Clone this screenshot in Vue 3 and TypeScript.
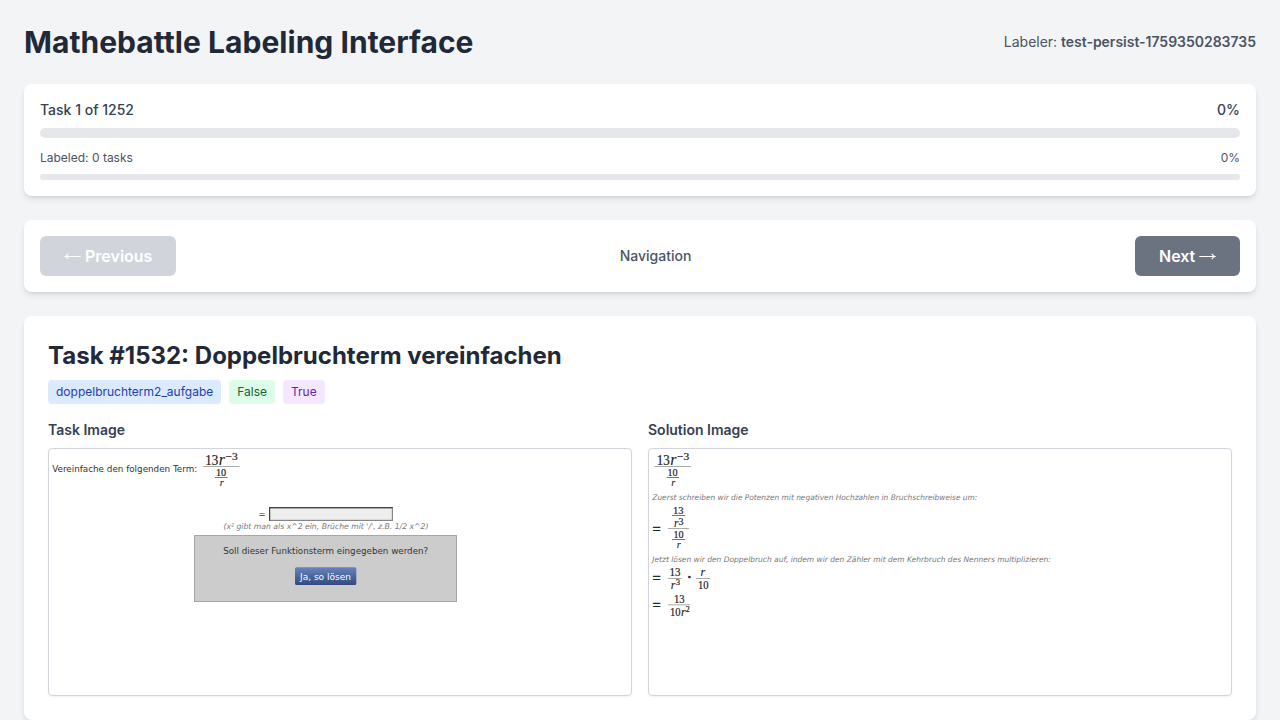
<script setup lang="ts">
import { ref, computed } from 'vue'

interface Glyph {
  t: string
  x: number
  y: number
  s: number
  w?: number
  k?: string
}
interface Rule {
  x: number
  y: number
  w: number
  dark?: boolean
}

const labeler = 'test-persist-1759350283735'
const total = 1252
const current = ref(1)
const labeled = ref(0)
const progress = computed(() => Math.round(((current.value - 1) / total) * 100))
const labeledProgress = computed(() => Math.round((labeled.value / total) * 100))

const tags = [
  { text: 'doppelbruchterm2_aufgabe', tone: 'blue' },
  { text: 'False', tone: 'green' },
  { text: 'True', tone: 'purple' },
]

/* Numerator 13r^-3 over 10/r, placed at a horizontal offset */
const termGlyphs = (dx: number): Glyph[] => [
  { t: '13', x: dx + 2.3, y: 15.9, s: 14.5, w: 13, k: 'math' },
  { t: 'r', x: dx + 15.8, y: 15.9, s: 16, k: 'math var' },
  { t: '−3', x: dx + 22.5, y: 11.4, s: 10, w: 12.3, k: 'math' },
  { t: '10', x: dx + 13, y: 26.7, s: 10.5, w: 10.2, k: 'math' },
  { t: 'r', x: dx + 16.7, y: 36.8, s: 10.5, k: 'math var' },
]
const termRules = (dx: number): Rule[] => [
  { x: dx, y: 17, w: 36.5 },
  { x: dx + 12, y: 28, w: 12.5, dark: true },
]

const taskGlyphs: Glyph[] = [
  { t: 'Vereinfache den folgenden Term:', x: 3.2, y: 23, s: 8.6, w: 145, k: 'plain' },
  ...termGlyphs(154),
  { t: '=', x: 209.5, y: 68, s: 8.6, k: 'plain' },
  { t: "(x² gibt man als x^2 ein, Brüche mit '/', z.B. 1/2 x^2)", x: 174.4, y: 80, s: 7.8, w: 205, k: 'note' },
]
const taskRules = termRules(154)

const solutionGlyphs: Glyph[] = [
  ...termGlyphs(5.5),
  { t: 'Zuerst schreiben wir die Potenzen mit negativen Hochzahlen in Bruchschreibweise um:', x: 3.3, y: 51, s: 7.6, w: 325, k: 'note' },
  { t: '=', x: 3.4, y: 85.4, s: 14.5, k: 'math eq' },
  { t: '13', x: 24, y: 64.7, s: 10.5, w: 10.6, k: 'math' },
  { t: 'r', x: 25, y: 78, s: 11.5, k: 'math var' },
  { t: '3', x: 29.6, y: 76, s: 10.5, w: 5, k: 'math' },
  { t: '10', x: 24.4, y: 88.5, s: 10.5, w: 10.2, k: 'math' },
  { t: 'r', x: 27.7, y: 98.8, s: 10.5, k: 'math var' },
  { t: 'Jetzt lösen wir den Doppelbruch auf, indem wir den Zähler mit dem Kehrbruch des Nenners multiplizieren:', x: 3.3, y: 113, s: 7.6, w: 398.5, k: 'note' },
  { t: '=', x: 3.4, y: 133.8, s: 14.5, k: 'math eq' },
  { t: '13', x: 20.5, y: 127.3, s: 11.5, w: 11, k: 'math' },
  { t: 'r', x: 21.8, y: 139.8, s: 12, k: 'math var' },
  { t: '3', x: 27, y: 135.6, s: 8, w: 4, k: 'math' },
  { t: '·', x: 37.4, y: 134.4, s: 17, k: 'math eq' },
  { t: 'r', x: 51.6, y: 127.3, s: 12, k: 'math var' },
  { t: '10', x: 49, y: 139.5, s: 11.5, w: 10.6, k: 'math' },
  { t: '=', x: 3.4, y: 160.8, s: 14.5, k: 'math eq' },
  { t: '13', x: 25, y: 154.3, s: 11.5, w: 10.6, k: 'math' },
  { t: '10', x: 21, y: 167, s: 11.5, w: 10.6, k: 'math' },
  { t: 'r', x: 32, y: 167, s: 12, k: 'math var' },
  { t: '2', x: 36.8, y: 162.8, s: 8, w: 4, k: 'math' },
]
const solutionRules: Rule[] = [
  ...termRules(5.5),
  { x: 23, y: 66, w: 13, dark: true },
  { x: 19, y: 79, w: 21 },
  { x: 23, y: 90, w: 13, dark: true },
  { x: 19, y: 129, w: 13.5 },
  { x: 47, y: 129, w: 14 },
  { x: 19, y: 155.3, w: 22.5 },
]
</script>

<template>
  <div class="page">
    <header class="header">
      <h1>Mathebattle Labeling Interface</h1>
      <div class="labeler">Labeler: <strong>{{ labeler }}</strong></div>
    </header>

    <section class="card progress">
      <div class="row main-row">
        <span>Task {{ current }} of {{ total }}</span>
        <span>{{ progress }}%</span>
      </div>
      <div class="track"><div class="fill" :style="{ width: progress + '%' }"></div></div>
      <div class="row sub-row">
        <span>Labeled: {{ labeled }} tasks</span>
        <span>{{ labeledProgress }}%</span>
      </div>
      <div class="track thin"><div class="fill" :style="{ width: labeledProgress + '%' }"></div></div>
    </section>

    <nav class="card nav">
      <button class="btn prev" disabled>
        <svg class="arrow" width="17" height="14" viewBox="0 0 17 14">
          <path d="M16.7 7.5H1.5M4.3 4.8C3.6 6 2.5 7.1 1 7.5C2.5 7.9 3.6 9 4.3 10.2" />
        </svg>
        <span>Previous</span>
      </button>
      <span class="nav-label">Navigation</span>
      <button class="btn next">
        <span>Next</span>
        <svg class="arrow" width="17" height="14" viewBox="0 0 17 14">
          <path d="M.3 7.5H15.5M12.7 4.8C13.4 6 14.5 7.1 16 7.5C14.5 7.9 13.4 9 12.7 10.2" />
        </svg>
      </button>
    </nav>

    <main class="card task">
      <h2>Task #1532: Doppelbruchterm vereinfachen</h2>
      <div class="tags">
        <span v-for="tag in tags" :key="tag.text" class="tag" :class="tag.tone">{{ tag.text }}</span>
      </div>
      <div class="images">
        <section>
          <h3>Task Image</h3>
          <div class="frame">
            <svg width="582" height="246" viewBox="0 0 582 246">
              <defs>
                <linearGradient id="solve" x1="0" y1="0" x2="0" y2="1">
                  <stop offset="0" stop-color="#6783bf" />
                  <stop offset="1" stop-color="#344a80" />
                </linearGradient>
              </defs>
              <rect v-for="(r, i) in taskRules" :key="'r' + i" :x="r.x" :y="r.y" :width="r.w" height="1" :fill="r.dark ? '#777' : '#aaa'" />
              <text v-for="(g, i) in taskGlyphs" :key="'g' + i" :class="g.k" :x="g.x" :y="g.y" :font-size="g.s" :textLength="g.w" lengthAdjust="spacingAndGlyphs">{{ g.t }}</text>
              <rect x="220" y="58" width="124" height="14" fill="#858585" />
              <path d="M220 72V58H344L343 59.5H221.3V71Z" fill="#444" />
              <rect x="221.3" y="59.5" width="121.5" height="11.3" fill="#eee" />
              <rect x="145.5" y="86.5" width="262" height="66" fill="#ccc" stroke="#a6a6a6" />
              <text class="plain" x="174.2" y="105" font-size="8.6" textLength="205" lengthAdjust="spacingAndGlyphs">Soll dieser Funktionsterm eingegeben werden?</text>
              <rect x="246" y="118.3" width="61.3" height="17.6" rx="1.5" fill="url(#solve)" />
              <text class="plain white" x="251" y="130.6" font-size="8.6" textLength="51" lengthAdjust="spacingAndGlyphs">Ja, so lösen</text>
            </svg>
          </div>
        </section>
        <section>
          <h3>Solution Image</h3>
          <div class="frame">
            <svg width="582" height="246" viewBox="0 0 582 246">
              <rect v-for="(r, i) in solutionRules" :key="'r' + i" :x="r.x" :y="r.y" :width="r.w" height="1" :fill="r.dark ? '#777' : '#aaa'" />
              <text v-for="(g, i) in solutionGlyphs" :key="'g' + i" :class="g.k" :x="g.x" :y="g.y" :font-size="g.s" :textLength="g.w" lengthAdjust="spacingAndGlyphs">{{ g.t }}</text>
            </svg>
          </div>
        </section>
      </div>
    </main>
  </div>
</template>

<style>
body {
  background: #f3f4f6;
  overflow: hidden;
}
</style>

<style scoped>
* {
  box-sizing: border-box;
  margin: 0;
}
.page {
  height: 720px;
  overflow: hidden;
  padding: 24px;
  background: #f3f4f6;
  font-family: Inter, "Liberation Sans", sans-serif;
  color: #1f2937;
}
.header {
  display: flex;
  justify-content: space-between;
  align-items: center;
  height: 36px;
  margin-bottom: 24px;
}
h1 {
  font-size: 30px;
  line-height: 36px;
  font-weight: 700;
  letter-spacing: 0.03px;
}
.labeler {
  font-size: 14px;
  line-height: 20px;
  letter-spacing: -0.02px;
  color: #4b5563;
}
.labeler strong {
  font-weight: 600;
}
.card {
  background: #fff;
  border-radius: 8px;
  box-shadow: 0 4px 6px -1px rgba(0, 0, 0, 0.1), 0 2px 4px -2px rgba(0, 0, 0, 0.1);
  margin-bottom: 24px;
}
.progress {
  padding: 16px;
  height: 112px;
}
.row {
  display: flex;
  justify-content: space-between;
}
.main-row {
  font-size: 14px;
  line-height: 20px;
  font-weight: 500;
  color: #374151;
  margin-bottom: 8px;
}
.sub-row {
  font-size: 12px;
  line-height: 16px;
  color: #4b5563;
  margin: 12px 0 8px;
}
.track {
  height: 10px;
  border-radius: 5px;
  background: #e5e7eb;
}
.track.thin {
  height: 6px;
}
.fill {
  height: 100%;
  border-radius: inherit;
  background: #2563eb;
}
.nav {
  display: flex;
  justify-content: space-between;
  align-items: center;
  height: 72px;
  padding: 16px;
}
.nav-label {
  font-size: 14px;
  line-height: 20px;
  font-weight: 500;
  color: #4b5563;
}
.btn {
  display: flex;
  align-items: center;
  gap: 4px;
  height: 40px;
  padding: 0 24px;
  border: 0;
  border-radius: 6px;
  font: 600 16px/24px Inter, "Liberation Sans", sans-serif;
  color: #fff;
}
.prev {
  width: 136px;
  background: #d1d5db;
}
.next {
  width: 105px;
  background: #6b7280;
}
.arrow {
  flex: none;
  fill: none;
  stroke: #fff;
  stroke-width: 1.1;
}
.task {
  height: 404px;
  padding: 24px;
}
h2 {
  font-size: 24px;
  line-height: 32px;
  font-weight: 700;
  margin-bottom: 8px;
}
.tags {
  display: flex;
  gap: 8px;
  margin-bottom: 16px;
}
.tag {
  padding: 4px 8px;
  border-radius: 4px;
  font-size: 12px;
  line-height: 16px;
}
.blue {
  background: #dbeafe;
  color: #1e40af;
}
.green {
  background: #dcfce7;
  color: #166534;
}
.purple {
  background: #f3e8ff;
  color: #6b21a8;
}
.images {
  display: grid;
  grid-template-columns: 1fr 1fr;
  gap: 16px;
}
h3 {
  font-size: 14px;
  line-height: 20px;
  font-weight: 600;
  color: #374151;
  margin-bottom: 8px;
}
.frame {
  height: 248px;
  border: 1px solid #d1d5db;
  border-radius: 4px;
  box-shadow: 0 1px 2px rgba(0, 0, 0, 0.05);
  overflow: hidden;
}
.frame svg {
  display: block;
}
.math {
  font-family: "Liberation Serif", serif;
  fill: #222;
  stroke: #222;
  stroke-width: 0.2;
}
.var {
  font-style: italic;
  stroke-width: 0.1;
}
.eq {
  stroke-width: 0.5;
}
.plain {
  font-family: "DejaVu Sans", sans-serif;
  fill: #333;
}
.note {
  font-family: "DejaVu Sans", sans-serif;
  font-style: italic;
  fill: #777;
}
.white {
  fill: #fff;
}
</style>
